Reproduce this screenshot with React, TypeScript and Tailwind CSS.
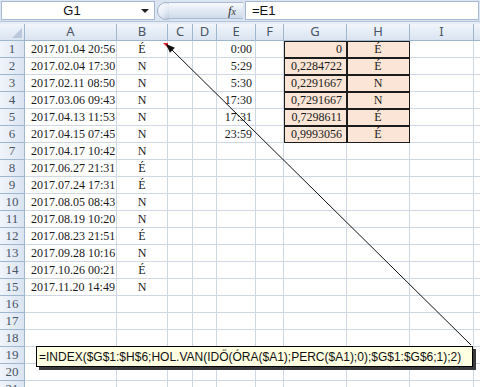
const cols = ['A', 'B', 'C', 'D', 'E', 'F', 'G', 'H', 'I', ''];

const dates = [
  '2017.01.04 20:56',
  '2017.02.04 17:30',
  '2017.02.11 08:50',
  '2017.03.06 09:43',
  '2017.04.13 11:53',
  '2017.04.15 07:45',
  '2017.04.17 10:42',
  '2017.06.27 21:31',
  '2017.07.24 17:31',
  '2017.08.05 08:43',
  '2017.08.19 10:20',
  '2017.08.23 21:51',
  '2017.09.28 10:16',
  '2017.10.26 00:21',
  '2017.11.20 14:49',
];
const flags = ['É', 'N', 'N', 'N', 'N', 'N', 'N', 'É', 'É', 'N', 'N', 'É', 'N', 'É', 'N'];
const times = ['0:00', '5:29', '5:30', '17:30', '17:31', '23:59'];
const gVals = ['0', '0,2284722', '0,2291667', '0,7291667', '0,7298611', '0,9993056'];
const hVals = ['É', 'É', 'N', 'N', 'É', 'É'];

const formula = '=INDEX($G$1:$H$6;HOL.VAN(IDŐ(ÓRA($A1);PERC($A1);0);$G$1:$G$6;1);2)';

const cell = 'h-[17px] border-r border-b border-[#d0d7e5] bg-white flex items-center overflow-hidden whitespace-nowrap';
const peach = 'h-[17px] border-r border-b border-[#1c1c1c] bg-[#fbe5d6] shadow-[inset_1px_1px_0_#1c1c1c] flex items-center overflow-hidden whitespace-nowrap';
const head = 'h-[17px] border-r border-b border-[#9eb6ce] bg-gradient-to-b from-[#f1f5fb] to-[#dae4f1] flex items-center justify-center text-[13px] text-[#4a5566]';

const FormulaBar = () => (
  <div className="flex h-[22px] items-center gap-[2px] bg-[#dbe5f2] px-[1px] border-b border-[#b3c3d8]">
    <div className="relative flex h-[19px] w-[154px] items-center border border-[#a8b9d1] bg-white">
      <span className="w-[140px] text-center text-[13px] text-[#111]">G1</span>
      <span className="absolute right-[5px] top-[7px] h-0 w-0 border-x-[4px] border-t-[4px] border-x-transparent border-t-[#222]" />
    </div>
    <div className="flex h-[19px] w-[86px] items-center">
      <div className="h-[18px] w-[18px] shrink-0 rounded-full border border-[#9fb1c8] bg-gradient-to-br from-[#ffffff] via-[#e4ebf5] to-[#aebdd1]" />
      <div className="-ml-[6px] flex h-[17px] flex-1 items-center justify-end border-y border-[#a9bad2] bg-gradient-to-b from-[#f7f9fc] to-[#cfdbeb] pr-[7px]">
        <span className="text-[13px] italic text-[#333]" style={{ fontFamily: '"Liberation Serif", serif' }}>
          f<span className="text-[10px]">x</span>
        </span>
      </div>
    </div>
    <div className="flex h-[19px] flex-1 items-center border border-[#a8b9d1] bg-white pl-[6px] text-[13px] text-[#111]">
      =E1
    </div>
  </div>
);

const Sheet = () => {
  const rows = Array.from({ length: 21 }, (_, i) => i + 1);
  return (
    <div className="grid grid-cols-[25px_92px_51px_25px_24px_39px_28px_63px_63px_64px_20px]">
      <div className={head + ' relative'}>
        <span className="absolute bottom-[2px] right-[2px] h-0 w-0 border-l-[9px] border-t-[9px] border-l-transparent border-t-transparent border-b-0 border-r-0" style={{}} />
        <svg className="absolute bottom-[2px] right-[2px]" width="10" height="10">
          <polygon points="10,0 10,10 0,10" fill="#b9c8db" />
        </svg>
      </div>
      {cols.map((c, i) => (
        <div key={i} className={head}>
          {c}
        </div>
      ))}
      {rows.map((r) => {
        const i = r - 1;
        const inTable = i < 6;
        return (
          <div key={r} className="contents">
            <div className={head + ' bg-gradient-to-r'}>{r}</div>
            <div className={cell + ' pl-[6px]'}>{dates[i] ?? ''}</div>
            <div className={cell + ' justify-center'}>{flags[i] ?? ''}</div>
            <div className={cell} />
            <div className={cell} />
            <div className={cell + ' justify-end pr-[3px]'}>{inTable ? times[i] : ''}</div>
            <div className={cell} />
            <div className={(inTable ? peach : cell) + ' justify-end pr-[4px]'}>{inTable ? gVals[i] : ''}</div>
            <div className={(inTable ? peach : cell) + ' justify-center'}>{inTable ? hVals[i] : ''}</div>
            <div className={cell} />
            <div className={cell} />
          </div>
        );
      })}
    </div>
  );
};

export default function App() {
  return (
    <div
      className="relative h-[387px] w-[480px] overflow-hidden bg-white text-[12px] text-[#1a1a1a]"
      style={{ fontFamily: '"Liberation Serif", serif' }}
    >
      <div style={{ fontFamily: '"Liberation Sans", Arial, sans-serif' }}>
        <FormulaBar />
        <div className="h-[2px] bg-[#e6edf6]" />
      </div>
      <div className="[&>div>div:nth-child(-n+11)]:font-sans">
        <Sheet />
      </div>

      {/* comment pointer */}
      <svg className="pointer-events-none absolute inset-0" width="480" height="387">
        <polygon points="163,43 168,43 168,48" fill="#e0212b" />
        <line x1="471" y1="345" x2="170" y2="48" stroke="#111" strokeWidth="1" />
        <polygon points="166,44 174.9,47.8 169.9,52.8" fill="#111" />
      </svg>

      {/* comment box */}
      <div
        className="absolute left-[36px] top-[346px] flex h-[21px] w-[437px] items-center border border-black bg-[#ffffe1] pl-[2px] text-[12px] text-[#111] shadow-[3px_3px_0_#3a3a3a] whitespace-nowrap"
        style={{ fontFamily: '"Liberation Sans", Arial, sans-serif' }}
      >
        {formula}
      </div>
    </div>
  );
}
